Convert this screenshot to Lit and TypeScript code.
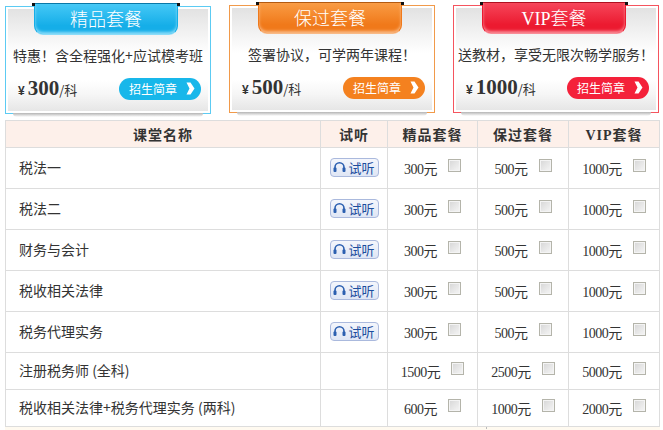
import { LitElement, html, css } from "lit";
import { customElement } from "lit/decorators.js";

interface Plan { cls: string; title: string; desc: string; price: string; }
const plans: Plan[] = [
  { cls: "blue", title: "精品套餐", desc: "特惠！含全程强化+应试模考班", price: "300" },
  { cls: "orange", title: "保过套餐", desc: "签署协议，可学两年课程！", price: "500" },
  { cls: "red", title: "VIP套餐", desc: "送教材，享受无限次畅学服务！", price: "1000" },
];
const rows: [string, boolean, string, string, string][] = [
  ["税法一", true, "300", "500", "1000"],
  ["税法二", true, "300", "500", "1000"],
  ["财务与会计", true, "300", "500", "1000"],
  ["税收相关法律", true, "300", "500", "1000"],
  ["税务代理实务", true, "300", "500", "1000"],
  ["注册税务师 (全科)", false, "1500", "2500", "5000"],
  ["税收相关法律+税务代理实务 (两科)", false, "600", "1000", "2000"],
];

@customElement("app-root")
export class AppRoot extends LitElement {
  static styles = css`
    :host {
      display: block;
      width: 663px;
      height: 430px;
      overflow: hidden;
      background: #fff;
      font-family: "Noto Sans CJK SC", "Liberation Sans", sans-serif;
      color: #333;
      font-size: 14px;
    }
    .cards {
      display: flex;
      gap: 18px;
      padding: 5px 0 0 5px;
      height: 120px;
      box-sizing: border-box;
    }
    .card {
      --c: #5ccbf3;
      --btn: #18b7ea;
      --r1: #45c8f6;
      --r2: #15aee8;
      --r3: #8adcf9;
      width: 206px;
      height: 108px;
      box-sizing: border-box;
      border: 1px solid var(--c);
      position: relative;
      display: flex;
      flex-direction: column;
      background: #fff;
    }
    .card.blue { margin-top: 1px; }
    .card.orange { --c: #f19a4a; --btn: #f4811f; --r1: #f99c44; --r2: #f0791a; --r3: #f9b985; }
    .card.red { --c: #f5545e; --btn: #f4213a; --r1: #f6465a; --r2: #ec1a30; --r3: #f98c96; }
    .inner {
      flex: 1;
      border: 2px solid #fff;
      background: linear-gradient(#e2e2e2 0%, #f6f6f6 30%, #fff 44%, #fff 70%, #f6f6f6 84%, #e6e6e6 100%);
      display: flex;
      flex-direction: column;
      min-height: 0;
    }
    .shadow {
      position: absolute;
      left: 7px;
      right: 7px;
      top: 100%;
      height: 4px;
      background: linear-gradient(#b4b4b4, #e8e8e8 70%, #fff);
      border-radius: 0 0 6px 6px;
    }
    .ribbon {
      width: 144px;
      height: 32px;
      box-sizing: border-box;
      margin: -6px 0 0 26px;
      border-top: 1px solid #0878a8;
      border-left: 1px solid var(--r2);
      border-right: 1px solid var(--r2);
      border-bottom: 1px solid var(--r3);
      border-radius: 0 0 9px 9px;
      background: linear-gradient(var(--r1), var(--r2) 72%);
      box-shadow: inset 0 -2px 3px var(--r3);
      color: #fff;
      font-family: "Liberation Serif", "Noto Sans CJK SC", serif;
      font-size: 18px;
      line-height: 32px;
      text-align: center;
      position: relative;
      font-weight: 300;
      flex: none;
    }
    .orange .ribbon { border-top-color: #b35a10; }
    .red .ribbon { border-top-color: #b01020; }
    .ribbon::before,
    .ribbon::after {
      content: "";
      position: absolute;
      top: -1px;
      width: 3px;
      height: 3px;
      background: #111;
    }
    .ribbon::before { left: -3px; }
    .ribbon::after { right: -3px; }
    .desc {
      text-align: center;
      margin-top: 8px;
      height: 24px;
      line-height: 24px;
      font-size: 14px;
      color: #333;
      white-space: nowrap;
      flex: none;
    }
    .bottom {
      display: flex;
      align-items: center;
      justify-content: space-between;
      padding: 9px 7px 0 10px;
    }
    .price { display: flex; align-items: baseline; color: #333; white-space: nowrap; }
    .yen { font: bold 12px "Liberation Sans", sans-serif; margin-right: 3px; }
    .num { font: bold 21px "Liberation Serif", serif; color: #333; }
    .unit { font-size: 13px; }
    .btn {
      width: 82px;
      height: 22px;
      border-radius: 11px;
      background: var(--btn);
      color: #fff;
      font-size: 12px;
      line-height: 21px;
      display: flex;
      align-items: center;
      box-sizing: border-box;
      padding-left: 10px;
      gap: 9px;
    }
    .btn svg { flex: none; }
    table {
      border-collapse: collapse;
      table-layout: fixed;
      width: 655px;
      margin-left: 5px;
    }
    th, td {
      border: 1px solid #ddd;
      padding: 0;
      text-align: center;
      font-size: 13px;
      color: #333;
    }
    th {
      height: 26px;
      background: #fdf0ea;
      font-family: "Liberation Serif", "Noto Sans CJK SC", serif;
      font-size: 14px;
      font-weight: 700;
      letter-spacing: 1px;
      color: #333;
    }
    td { height: 38px; padding-bottom: 2px; }
    tr.short td { height: 34px; }
    td.name { text-align: left; padding-left: 13px; font-size: 14px; white-space: nowrap; color: #333; }
    .cell {
      display: flex;
      justify-content: center;
      align-items: center;
      gap: 11px;
      font-family: "Liberation Serif", "Noto Sans CJK SC", serif;
      font-size: 14px;
      letter-spacing: -0.5px;
    }
    .val { padding-top: 2px; }
    .box {
      width: 13px;
      height: 13px;
      box-sizing: border-box;
      border: 1px solid #b4b4aa;
      background: linear-gradient(135deg, #d6d6d6, #f6f6f6);
      box-shadow: inset 0 0 0 1px #f4f4f4;
      margin-bottom: 3px;
    }
    .listen {
      display: flex;
      align-items: center;
      justify-content: center;
      gap: 2px;
      width: 49px;
      height: 19px;
      margin: 0 auto;
      box-sizing: border-box;
      border: 1px solid #aab9dd;
      border-radius: 4px;
      background: linear-gradient(#f4f6fc, #dfe6f5);
      color: #1c4d9e;
      font-size: 13px;
      line-height: 17px;
    }
    .foot {
      height: 4px;
      margin-left: 5px;
      width: 655px;
      background: #fffaf0;
      display: flex;
      box-sizing: border-box;
      padding-left: 481px;
    }
    .foot i { display: block; border-left: 1px dotted #bbb; }
  `;

  private check(v: string) {
    return html`<div class="cell"><span class="val">${v}元</span><span class="box"></span></div>`;
  }

  render() {
    return html`
      <div class="cards">
        ${plans.map((p) => html`
          <div class="card ${p.cls}">
            <div class="inner">
              <div class="ribbon">${p.title}</div>
              <div class="desc">${p.desc}</div>
              <div class="bottom">
                <div class="price">
                  <span class="yen">¥</span><span class="num">${p.price}</span><span class="unit">/科</span>
                </div>
                <div class="btn">
                  <span>招生简章</span>
                  <svg width="9" height="13" viewBox="0 0 9 13"><path d="M0.5 0.5h4l4 6-4 6h-4l3-6z" fill="#fff"/></svg>
                </div>
              </div>
            </div>
            <div class="shadow"></div>
          </div>
        `)}
      </div>
      <table>
        <colgroup>
          <col style="width:315px" /><col style="width:67px" /><col style="width:90px" /><col style="width:91px" /><col style="width:91px" />
        </colgroup>
        <thead>
          <tr><th>课堂名称</th><th>试听</th><th>精品套餐</th><th>保过套餐</th><th>VIP套餐</th></tr>
        </thead>
        <tbody>
          ${rows.map((r) => html`
            <tr class=${r[1] ? "" : "short"}>
              <td class="name">${r[0]}</td>
              <td>${r[1] ? html`<span class="listen">
                <svg width="13" height="12" viewBox="0 0 13 12"><path d="M2 9V6.2a4.5 4.5 0 0 1 9 0V9" fill="none" stroke="#2b5fb0" stroke-width="1.6"/><rect x="0.5" y="6.5" width="3" height="4.5" rx="1" fill="#2b5fb0"/><rect x="9.5" y="6.5" width="3" height="4.5" rx="1" fill="#2b5fb0"/></svg>
                试听</span>` : ""}</td>
              <td>${this.check(r[2])}</td>
              <td>${this.check(r[3])}</td>
              <td>${this.check(r[4])}</td>
            </tr>
          `)}
        </tbody>
      </table>
      <div class="foot"><i></i></div>
    `;
  }
}
